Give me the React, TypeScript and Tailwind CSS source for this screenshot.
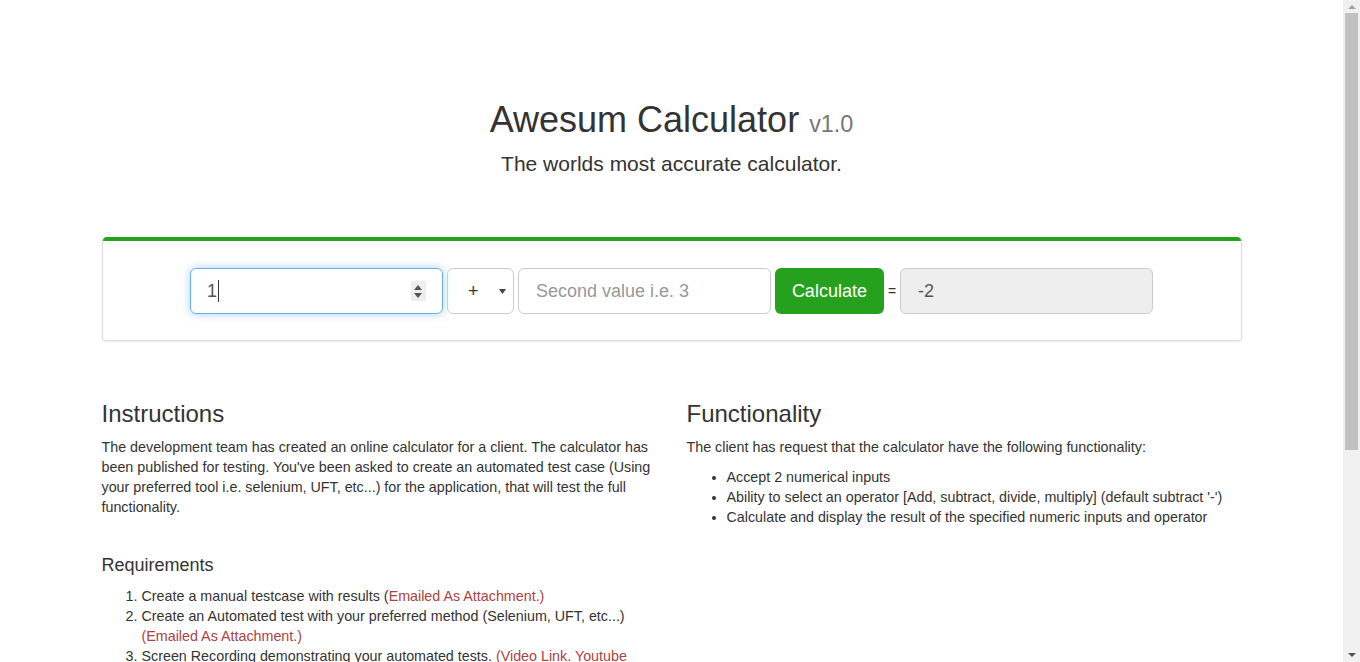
const green = "bg-[#26a11d]";

const Spinner = () => (
  <div className="flex h-[20px] w-[15px] flex-col items-center justify-center gap-[3px] bg-[#eeeeee]">
    <svg width="8" height="5" viewBox="0 0 8 5">
      <path d="M0 5 L4 0 L8 5 Z" fill="#555" />
    </svg>
    <svg width="8" height="5" viewBox="0 0 8 5">
      <path d="M0 0 L4 5 L8 0 Z" fill="#555" />
    </svg>
  </div>
);

const Calculator = () => (
  <div className="rounded-[4px] border border-t-0 border-[#dddddd] shadow-[0_1px_2px_rgba(0,0,0,0.08)]">
    <div className={`h-[4px] rounded-t-[4px] ${green}`} />
    <div className="flex items-center justify-center gap-[4px] pt-[27px] pb-[26px] text-[18px]">
      <div className="flex h-[46px] w-[253px] items-center justify-between rounded-[6px] border border-[#66afe9] pl-[16px] pr-[16px] text-[#555] shadow-[0_0_8px_rgba(102,175,233,0.6)]">
        <span className="flex items-center">
          1<span className="ml-[1px] inline-block h-[22px] w-px bg-[#333]" />
        </span>
        <Spinner />
      </div>
      <div className="flex h-[46px] w-[67px] items-center justify-between rounded-[6px] border border-[#cccccc] pl-[20px] pr-[7px] text-[#333]">
        <span>+</span>
        <svg width="7" height="5" viewBox="0 0 7 5">
          <path d="M0 0 L7 0 L3.5 5 Z" fill="#444" />
        </svg>
      </div>
      <div className="flex h-[46px] w-[253px] items-center rounded-[6px] border border-[#cccccc] px-[17px] text-[#999]">
        Second value i.e. 3
      </div>
      <button className={`h-[46px] w-[109px] rounded-[6px] text-[18px] text-white ${green}`}>Calculate</button>
      <span className="text-[14px] text-[#333]">=</span>
      <div className="flex h-[46px] w-[253px] items-center rounded-[6px] border border-[#cccccc] bg-[#eeeeee] px-[17px] text-[#555]">
        -2
      </div>
    </div>
  </div>
);

const Link = ({ children }: { children: React.ReactNode }) => (
  <span className="text-[#a94442]">{children}</span>
);

export default function App() {
  return (
    <div className="flex h-[662px] w-[1360px] overflow-hidden bg-white font-['Liberation_Sans',Arial,sans-serif] text-[14.3px] leading-[20px] text-[#333]">
      <div className="flex-1">
        <div className="mx-auto w-[1170px] px-[15px]">
          <div className="pt-[100px] text-center">
            <h1 className="h-[40px] text-[36px] leading-[40px]">
              Awesum Calculator <small className="text-[23.4px] leading-none text-[#777]">v1.0</small>
            </h1>
            <p className="mt-[9px] text-[21px] leading-[29px]">The worlds most accurate calculator.</p>
          </div>

          <div className="mt-[59px]">
            <Calculator />
          </div>

          <div className="mt-[60px] grid grid-cols-2 gap-[30px]">
            <div>
              <h3 className="text-[24px] leading-[26.4px]">Instructions</h3>
              <p className="mt-[10px]">
                The development team has created an online calculator for a client. The calculator has been
                published for testing. You've been asked to create an automated test case (Using your preferred tool
                i.e. selenium, UFT, etc...) for the application, that will test the full functionality.
              </p>
              <h4 className="mt-[39px] text-[18px] leading-[19.8px]">Requirements</h4>
              <ol className="mt-[10px] list-decimal pl-[40px]">
                <li>
                  Create a manual testcase with results (<Link>Emailed As Attachment.)</Link>
                </li>
                <li>
                  Create an Automated test with your preferred method (Selenium, UFT, etc...){" "}
                  <Link>(Emailed As Attachment.)</Link>
                </li>
                <li>
                  Screen Recording demonstrating your automated tests.{" "}
                  <Link>
                    (Video Link. Youtube
                    <br />
                    or similar)
                  </Link>
                </li>
              </ol>
            </div>
            <div>
              <h3 className="text-[24px] leading-[26.4px]">Functionality</h3>
              <p className="mt-[10px]">The client has request that the calculator have the following functionality:</p>
              <ul className="mt-[10px] list-disc pl-[40px]">
                <li>Accept 2 numerical inputs</li>
                <li>Ability to select an operator [Add, subtract, divide, multiply] (default subtract '-')</li>
                <li>Calculate and display the result of the specified numeric inputs and operator</li>
              </ul>
            </div>
          </div>
        </div>
      </div>

      <div className="flex h-full w-[17px] flex-col items-center bg-[#f1f1f1]">
        <svg className="mt-[5px]" width="8" height="4" viewBox="0 0 8 4">
          <path d="M0 4 L4 0 L8 4 Z" fill="#a3a3a3" />
        </svg>
        <div className="mt-[4px] h-[437px] w-[13px] bg-[#c1c1c1]" />
        <div className="flex-1" />
        <svg className="mb-[5px]" width="8" height="4" viewBox="0 0 8 4">
          <path d="M0 0 L4 4 L8 0 Z" fill="#505050" />
        </svg>
      </div>
    </div>
  );
}
